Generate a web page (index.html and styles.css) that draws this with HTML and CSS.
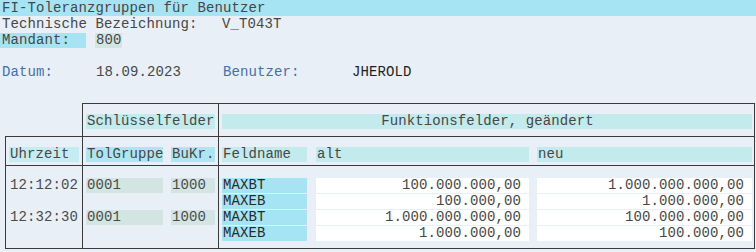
FILE: index.html
```html
<!DOCTYPE html>
<html lang="de">
<head>
<meta charset="utf-8">
<title>FI-Toleranzgruppen für Benutzer</title>
<link rel="stylesheet" href="styles.css">
</head>
<body>
<div class="page">
  <div class="line title">FI-Toleranzgruppen für Benutzer</div>
  <div class="line"><span class="w-tech">Technische Bezeichnung:</span><span>V_T043T</span></div>
  <div class="line"><span class="mand-lbl">Mandant:</span><span class="mand-val">800</span></div>
  <div class="line"></div>
  <div class="line"><span class="w-datum blue">Datum:</span><span class="w-date">18.09.2023</span><span class="w-ben blue">Benutzer:</span><span class="user">JHEROLD</span></div>

  <div class="tbl">
    <div class="cell blank"></div>
    <div class="cell c2 r1"><div class="box hdr w-key">Schlüsselfelder</div></div>
    <div class="cell c3 r1"><div class="box hdr w-func center">Funktionsfelder, geändert</div></div>

    <div class="cell c1 r2"><div class="box hdr2 w-time">Uhrzeit</div></div>
    <div class="cell c2 r2 flexrow"><div class="box keyhdr w-tol">TolGruppe</div><div class="box keyhdr w-bukr">BuKr.</div></div>
    <div class="cell c3 r2 flexrow"><div class="box hdr w-feld">Feldname</div><div class="box hdr w-alt">alt</div><div class="box hdr w-neu">neu</div></div>

    <div class="cell c1 r3">
      <div class="drow"><span class="txt">12:12:02</span></div>
      <div class="drow"></div>
      <div class="drow"><span class="txt">12:32:30</span></div>
      <div class="drow"></div>
    </div>
    <div class="cell c2 r3">
      <div class="drow flexrow"><div class="box keyval w-tol">0001</div><div class="box keyval w-bukr">1000</div></div>
      <div class="drow"></div>
      <div class="drow flexrow"><div class="box keyval w-tol">0001</div><div class="box keyval w-bukr">1000</div></div>
      <div class="drow"></div>
    </div>
    <div class="cell c3 r3">
      <div class="drow flexrow"><div class="box fname w-feld">MAXBT</div><div class="box num w-alt">100.000.000,00</div><div class="box num w-neu">1.000.000.000,00</div></div>
      <div class="drow flexrow"><div class="box fname w-feld">MAXEB</div><div class="box num w-alt">100.000,00</div><div class="box num w-neu">1.000.000,00</div></div>
      <div class="drow flexrow"><div class="box fname w-feld">MAXBT</div><div class="box num w-alt">1.000.000.000,00</div><div class="box num w-neu">100.000.000,00</div></div>
      <div class="drow flexrow"><div class="box fname w-feld">MAXEB</div><div class="box num w-alt">1.000.000,00</div><div class="box num w-neu">100.000,00</div></div>
    </div>
  </div>
</div>
</body>
</html>
```

FILE: styles.css
```css
* { box-sizing: border-box; }
html, body { margin: 0; padding: 0; }
body {
  background: #e8eff6;
  font-family: "Liberation Mono", "Courier New", monospace;
  font-size: 14px;
  letter-spacing: 0.1px;
  color: #474747;
  width: 756px;
  height: 252px;
  overflow: hidden;
}
.page { width: 756px; }
.line {
  height: 16px;
  line-height: 16px;
  padding-left: 2px;
  display: flex;
  white-space: pre;
}
.title { background: #a6e4f4; }
.w-tech { width: 220px; }
.mand-lbl {
  width: 86px;
  margin-left: -2px;
  padding-left: 2px;
  background: #a6e4f4;
  height: 15px;
  margin-top: 1px;
  line-height: 14px;
}
.mand-val {
  width: 27px;
  margin-left: 9px;
  padding-left: 1px;
  background: #d3e5e3;
  height: 15px;
  margin-top: 1px;
  line-height: 14px;
}
.blue { color: #4470ab; }
.w-datum { width: 94px; }
.w-date { width: 127px; }
.w-ben { width: 129px; }
.user { color: #1e1e1e; }

.tbl {
  display: grid;
  grid-template-columns: 77px 136px 537px;
  margin: 23px 0 0 5px;
}
.cell { border-left: 1px solid #3a3a3a; }
.cell.blank { border-left: none; }
.c3 { border-right: 1px solid #3a3a3a; }
.c1, .c2, .c3 { padding-left: 3px; }
.r1 { border-top: 1px solid #3a3a3a; padding-top: 10px; padding-bottom: 7px; }
.r2 { border-top: 1px solid #3a3a3a; padding-top: 10px; padding-bottom: 3px; }
.r3 { border-top: 1px solid #3a3a3a; border-bottom: 1px solid #3a3a3a; padding-top: 12px; padding-bottom: 6px; }
.flexrow { display: flex; }
.box {
  height: 15px;
  line-height: 15px;
  padding-left: 1px;
  white-space: pre;
  overflow: hidden;
}
.hdr { background: #c3eaec; }
.hdr2 { background: #c6ecf3; }
.keyhdr { background: #aee5f3; }
.keyval { background: #d3e5e3; color: #4a4a4a; }
.fname { background: #a6e4f4; color: #2a2a2a; }
.num { background: #ffffff; text-align: right; padding-right: 8px; color: #474747; }
.center { text-align: center; }
.w-key { width: 129px; }
.w-func { width: 530px; }
.w-time { width: 70px; }
.w-tol { width: 77px; }
.w-bukr { width: 44px; margin-left: 8px; }
.w-feld { width: 85px; }
.w-alt { width: 213px; margin-left: 9px; }
.w-neu { width: 215px; margin-left: 8px; }
.drow { height: 16px; }
.txt { display: block; line-height: 15px; padding-left: 1px; color: #4a4a4a; white-space: pre; }
```
